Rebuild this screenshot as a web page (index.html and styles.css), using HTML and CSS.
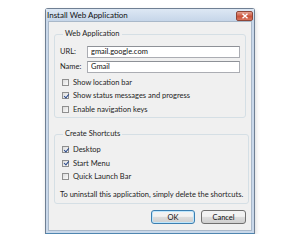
FILE: index.html
```html
<!DOCTYPE html>
<html lang="en">
<head>
  <meta charset="UTF-8">
  <meta name="viewport" content="width=device-width, initial-scale=1.0">
  <title>Install Web Application</title>
  <link rel="stylesheet" href="styles.css">
</head>
<body>
  <div class="window">
    <div class="titlebar">
      <span class="title">Install Web Application</span>
      <span class="close">
        <svg width="8" height="6" viewBox="0 0 8 6"><path d="M1.5 0.8 L6.5 5.2 M6.5 0.8 L1.5 5.2" stroke="#fff" stroke-width="1.4"/></svg>
      </span>
    </div>
    <div class="client">
      <fieldset class="group first">
        <legend>Web Application</legend>
        <div class="field">
          <label for="url">URL:</label>
          <input type="text" id="url" value="gmail.google.com">
        </div>
        <div class="field">
          <label for="name">Name:</label>
          <input type="text" id="name" value="Gmail">
        </div>
        <div class="check first-check"><span class="box"></span>Show location bar</div>
        <div class="check"><span class="box checked"></span>Show status messages and progress</div>
        <div class="check"><span class="box"></span>Enable navigation keys</div>
      </fieldset>

      <fieldset class="group second">
        <legend>Create Shortcuts</legend>
        <div class="check"><span class="box checked"></span>Desktop</div>
        <div class="check"><span class="box checked"></span>Start Menu</div>
        <div class="check"><span class="box"></span>Quick Launch Bar</div>
        <p class="note">To uninstall this application, simply delete the shortcuts.</p>
      </fieldset>

      <div class="buttons">
        <button class="btn default">OK</button>
        <button class="btn">Cancel</button>
      </div>
    </div>
  </div>
</body>
</html>
```

FILE: styles.css
```css
body {
  margin: 0;
  padding: 0;
  background-color: white;
  font-family: Lato, "Open Sans", sans-serif;
  font-size: 7.5px;
  color: #1e1e1e;
}

.window {
  width: 210px;
  margin: 8px 0 0 45px;
  box-sizing: border-box;
  border: 1px solid #6f7f93;
  border-radius: 3px 3px 0 0;
  background-color: #c9d8ea;
  padding: 0 2px 2px 2px;
  box-shadow: 1px 2px 4px rgba(0, 0, 0, 0.15);
  border-bottom-color: #4f86b0;
}

.titlebar {
  height: 12px;
  display: flex;
  align-items: center;
  justify-content: space-between;
  background: linear-gradient(#dde8f4, #c6d6e9);
  margin: 0 -2px;
  padding: 0 1px 0 1px;
}

.title {
  font-size: 8px;
  color: #111;
  line-height: 12px;
}

.close {
  width: 15px;
  height: 8px;
  margin-top: 1px;
  display: flex;
  align-items: center;
  justify-content: center;
  border: 1px solid #8e4638;
  border-radius: 2px;
  background: linear-gradient(#e6a08f, #c9533b 55%, #d9765f);
}

.client {
  background-color: #f0f0f0;
  border: 1px solid #a9b8c9;
  padding: 7px 5px 6px 5px;
}

.group {
  margin: 0;
  border: 1px solid #d5dfe5;
  border-radius: 3px;
  padding: 5px 5px 1px 5px;
  display: flex;
  flex-direction: column;
}

.group legend {
  padding: 0 2px;
  margin-left: 3px;
  line-height: 10px;
  height: 10px;
}

.group.second {
  margin-top: 11px;
  padding-top: 4px;
  padding-bottom: 2px;
}

.field {
  display: flex;
  align-items: center;
  height: 15px;
}

.field label {
  width: 27px;
  flex-shrink: 0;
}

.field input {
  flex-grow: 1;
  min-width: 0;
  height: 12px;
  box-sizing: border-box;
  margin: 0;
  padding: 0 3px;
  border: 1px solid #abadb3;
  border-top-color: #8e9197;
  background: white;
  font-family: inherit;
  font-size: 7.5px;
  color: #111;
  outline: none;
}

.check {
  display: flex;
  align-items: center;
  height: 13.5px;
  white-space: nowrap;
}

.first-check {
  margin-top: 1.5px;
}

.box {
  width: 7px;
  height: 7px;
  flex-shrink: 0;
  box-sizing: border-box;
  margin: 0 4px 0 2px;
  border: 1px solid #8f8f8f;
  background: linear-gradient(135deg, #dcdcdc, #fbfbfb);
  position: relative;
}

.box.checked::after {
  content: "";
  position: absolute;
  left: 1.5px;
  top: -0.5px;
  width: 1.6px;
  height: 4px;
  border: solid #2b4a8a;
  border-width: 0 1.2px 1.2px 0;
  transform: rotate(40deg);
}

.note {
  margin: 4px 0 0 0;
  height: 13.5px;
  line-height: 13.5px;
  white-space: nowrap;
}

.buttons {
  display: flex;
  justify-content: flex-end;
  gap: 6px;
  margin-top: 6px;
}

.btn {
  width: 45px;
  height: 14px;
  padding: 0;
  font-family: inherit;
  font-size: 7.5px;
  color: #111;
  border: 1px solid #707070;
  border-radius: 3px;
  background: linear-gradient(#f2f2f2 45%, #dddddd 50%, #cfcfcf);
}

.btn.default {
  width: 44px;
  border-color: #3c7fb1;
  box-shadow: inset 0 0 0 1px #bde6fd;
}
```
